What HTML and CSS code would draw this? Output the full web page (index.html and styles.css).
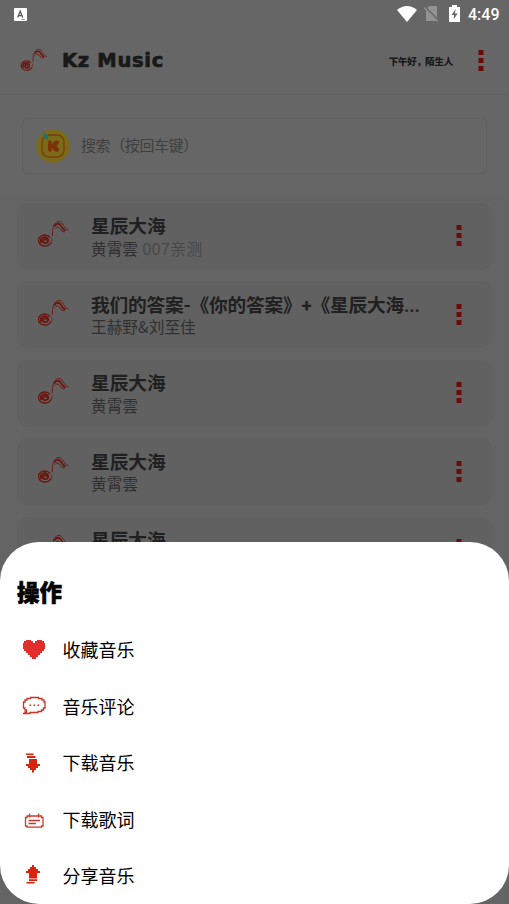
FILE: index.html
```html
<!DOCTYPE html>
<html lang="zh-CN">
<head>
<meta charset="utf-8">
<title>Kz Music</title>
<link rel="stylesheet" href="styles.css">
</head>
<body>
<svg class="defs" width="0" height="0" aria-hidden="true">
  <symbol id="note" viewBox="0 0 32 28">
    <g fill="none" stroke="currentColor">
      <ellipse cx="7.300" cy="20.500" rx="6.300" ry="5.500" stroke-width="1.300" stroke-dasharray="31 5" stroke-dashoffset="-2"/>
      <path d="M4 23C1.800 19 5 16.600 8 17.300s3.600 4.600 1 5.600-4.600-1.600-3-3.100 2.800 0 2.100 1" stroke-width="1.900"/>
      <path d="M13 24.200c1.500-2 1.800-4 1.300-6" stroke-width=".6"/>
      <path d="M14.800 16l.2-4.500C15.500 5 18 1.500 21.500 1.500c4.500 0 4.300 7.200 9.500 8.500" stroke-width=".9"/>
      <path d="M17 6.500c1.500-3.600 5.200-3.500 6.500-.7 1 2 1.800 3.800 4.500 4.900" stroke-width="1.800"/>
      <path d="M17.500 8.500c2-2.500 4-1.300 5.200.8 1 1.900 2.600 2.200 4.300 2.600" stroke-width="1"/>
    </g>
  </symbol>
  <symbol id="dots" viewBox="0 0 6 21">
    <path fill="currentColor" d="M.5 0h5v5h-5zM.5 8h5v5h-5zM.5 16h5v5h-5z"/>
  </symbol>
</svg>
<div class="screen">
  <div class="status">
    <svg class="ime" viewBox="0 0 13 13"><rect width="13" height="13" rx="1" fill="#fff"/><path d="M3.700 9.500L6.200 3.300 8.700 9.500M4.600 7.700h3.300" fill="none" stroke="#555" stroke-width="1.300"/><path d="M7 11.500h4" stroke="#777" stroke-width=".7"/></svg>
    <svg class="wifi" viewBox="0 0 20 16"><path d="M0 4Q10-4 20 4L10 16Z" fill="#fff"/></svg>
    <svg class="sim" viewBox="0 0 15 17"><path d="M5 1h8v15H2V4.500z" fill="#929292"/><path d="M0 1.500L14.500 16" stroke="#666" stroke-width="2.500"/><path d="M0 2.500L13.800 16.500" stroke="#929292" stroke-width="1.300"/></svg>
    <svg class="battery" viewBox="0 0 11 17"><path d="M3 0h5v2h3v15H0V2h3z" fill="#fff"/><path d="M6.600 4L2.500 10h2.700l-.6 4.500L8.700 8.500H5.900z" fill="#666"/></svg>
    <span class="clock">4:49</span>
  </div>
  <header class="header">
    <svg class="note logo"><use href="#note"/></svg>
    <h1 class="brand">Kz Music</h1>
    <span class="greeting">下午好<span class="comma">，</span>陌生人</span>
    <svg class="dots"><use href="#dots"/></svg>
  </header>
  <div class="search-area">
    <div class="search">
      <svg class="source" viewBox="0 0 34 34"><circle cx="17" cy="17" r="16.700" fill="#7b6b18"/><rect x="6" y="6" width="22" height="22" rx="7" fill="none" stroke="#773d0b" stroke-width="1.300"/><path d="M12.500 11.500q2-.5 3.200 1v3l3-3.500q2-1.200 4 0 1 1.500-.2 2.500l-2 2.500 2.300 2.500q1 2-.5 3-2 .8-3.500-.3L15.700 19v3q-1.700 1.200-3.400.2-1-5.400.2-10.700z" fill="#7c3209"/><path d="M8 4l1 3-1 2M11.200 5v3l-1.200 3M8 8h3" fill="none" stroke="#26716b" stroke-width="1.900"/></svg>
      <span class="placeholder">搜索（按回车键）</span>
    </div>
  </div>
  <main class="songs">
    <article class="song"><svg class="note"><use href="#note"/></svg><div class="info"><h2>星辰大海</h2><p>黄霄雲 <span class="tag">007亲测</span></p></div><svg class="dots"><use href="#dots"/></svg></article>
    <article class="song"><svg class="note"><use href="#note"/></svg><div class="info"><h2 class="long">我们的答案-《你的答案》+《星辰大海...</h2><p>王赫野&amp;刘至佳</p></div><svg class="dots"><use href="#dots"/></svg></article>
    <article class="song"><svg class="note"><use href="#note"/></svg><div class="info"><h2>星辰大海</h2><p>黄霄雲</p></div><svg class="dots"><use href="#dots"/></svg></article>
    <article class="song"><svg class="note"><use href="#note"/></svg><div class="info"><h2>星辰大海</h2><p>黄霄雲</p></div><svg class="dots"><use href="#dots"/></svg></article>
    <article class="song"><svg class="note"><use href="#note"/></svg><div class="info"><h2>星辰大海</h2></div><svg class="dots"><use href="#dots"/></svg></article>
  </main>
  <section class="sheet">
    <h2 class="sheet-title">操作</h2>
    <ul class="actions">
      <li><svg viewBox="0 0 24 24"><path fill="#e12e2c" d="M4 3h5v1h2v2h2V4h2V3h5v1h2v2h1v6h-1v2h-2v2h-2v2h-2v2h-2v2h-4v-2H8v-2H6v-2H4v-2H2v-2H1V6h1V4h2z"/></svg><span>收藏音乐</span></li>
      <li><svg viewBox="0 0 24 24"><path fill="none" stroke="#c93322" stroke-width="1.300" d="M1 19.500h2V18h1.500v-2H3v-2H1.500V8H3V6h2V4.500h3.500v-1h8v1H20V6h2v2h1v6h-1.500v2h-2v1.500H16v1H8v1H1z"/><path fill="#c93322" d="M7.500 10.500h1.700v1.500H7.500zM11.500 10.500h1.700v1.500h-1.700zM15.500 10.500h1.700v1.500h-1.700z"/></svg><span>音乐评论</span></li>
      <li><svg viewBox="0 0 24 24"><path fill="#d9230f" d="M4 3.500h7.500V5H4zM5 6h8.500v2H5zM7 9h8v5h3v2h-2v2h-2v2h-2v2.500h-2V20H8v-2H6v-2H4v-2h3z"/></svg><span>下载音乐</span></li>
      <li><svg viewBox="0 0 24 24"><path fill="none" stroke="#d5362a" stroke-width="1.300" d="M7.500 6.500v4M16.500 6.500v4M5 9h14.500v1.500H21V19h-1.500v1.200H5V19H3.500v-8.500H5zM6.500 13.500h11.500M6.500 16.500h7.500"/></svg><span>下载歌词</span></li>
      <li><svg viewBox="0 0 24 24"><path fill="#d9230f" d="M10 2h2v2h2v2h2v2h2v2h-3v5.500H7V10H4V8h2V6h2V4h2zM7 16.300h8v1.700H7zM4.500 19h8v1.500h-8z"/></svg><span>分享音乐</span></li>
    </ul>
  </section>
</div>
</body>
</html>
```
FILE: styles.css
```css
* { box-sizing: border-box; }
body, h1, h2, p, ul { margin: 0; padding: 0; }
body { font-family: "Noto Sans CJK SC", sans-serif; background: #666; }
svg { display: block; flex: none; }
.defs { position: absolute; }
.screen { position: relative; width: 509px; height: 904px; overflow: hidden; background: #666; }

.status { height: 28px; display: flex; align-items: center; padding: 0 10px 0 14px; }
.ime { width: 13px; height: 13px; }
.wifi { width: 20px; height: 16px; margin-left: auto; }
.sim { width: 15px; height: 17px; margin-left: 7px; margin-top: -1px; }
.battery { width: 11px; height: 17px; margin-left: 10px; margin-top: -1px; }
.clock { width: 31px; margin-left: 8px; padding-top: 1px; font: 500 16px/28px Roboto, sans-serif; color: #fff; }

.header { height: 67px; display: flex; align-items: center; padding: 0 25px 0 20px; border-bottom: 1px solid #606060; }
.note { width: 33px; height: 28px; color: #6b150e; }
.logo { width: 28px; height: 24px; margin-top: -3px; }
.brand { margin-left: 14px; font: bold 19.500px/24px "DejaVu Sans", sans-serif; letter-spacing: .7px; color: #191919; -webkit-text-stroke: .7px #191919; }
.greeting { margin-left: auto; margin-right: 25px; font-size: 9.500px; font-weight: 900; letter-spacing: -.2px; color: #191919; white-space: nowrap; }
.comma { letter-spacing: -1px; }
.dots { width: 6px; height: 21px; color: #680b0b; }
.header .dots { margin-top: -1px; }

.search-area { height: 101px; padding: 23px 22px; }
.search { height: 56px; display: flex; align-items: center; padding-left: 13px; border: 1px solid #606060; border-radius: 5px; }
.source { width: 34px; height: 34px; }
.placeholder { margin: -3px 0 0 11px; font-size: 15px; letter-spacing: -.4px; line-height: 22px; color: #404040; }

.songs { display: flex; flex-direction: column; gap: 11.500px; padding: 6.500px 17px; height: 708px; background: #646464; }
.song { flex: none; height: 67px; display: flex; align-items: center; padding: 0 30px 0 20px; border-radius: 11px; background: #616161; }
.song .note { margin-top: -4px; }
.song .dots { margin-top: -1px; }
.info { flex: 1; margin-left: 21px; align-self: flex-start; padding-top: 11.500px; white-space: nowrap; }
.info h2 { font-family: Roboto, "Noto Sans CJK SC", sans-serif; font-size: 18.700px; line-height: 26px; font-weight: 700; color: #202020; }
.info .long { letter-spacing: -.2px; }
.info p { margin-top: -1.500px; font-size: 15.700px; line-height: 20px; color: #303030; }
.tag { margin-left: 1px; font-family: "Liberation Sans", "Noto Sans CJK SC", sans-serif; font-size: 15.700px; letter-spacing: .5px; color: #484848; }

.sheet { position: absolute; left: 0; right: 0; top: 542.300px; height: 361.700px; padding: 32px 17px 0; border-radius: 39px; background: #fff; }
.sheet-title { font-size: 22.500px; line-height: 34px; font-weight: 900; color: #000; -webkit-text-stroke: .6px #000; }
.actions { list-style: none; margin-top: 12.700px; }
.actions li { height: 56.500px; display: flex; align-items: center; padding-left: 5px; font-size: 18px; color: #000; }
.actions svg { width: 24px; height: 24px; margin-right: 16.500px; }
```
